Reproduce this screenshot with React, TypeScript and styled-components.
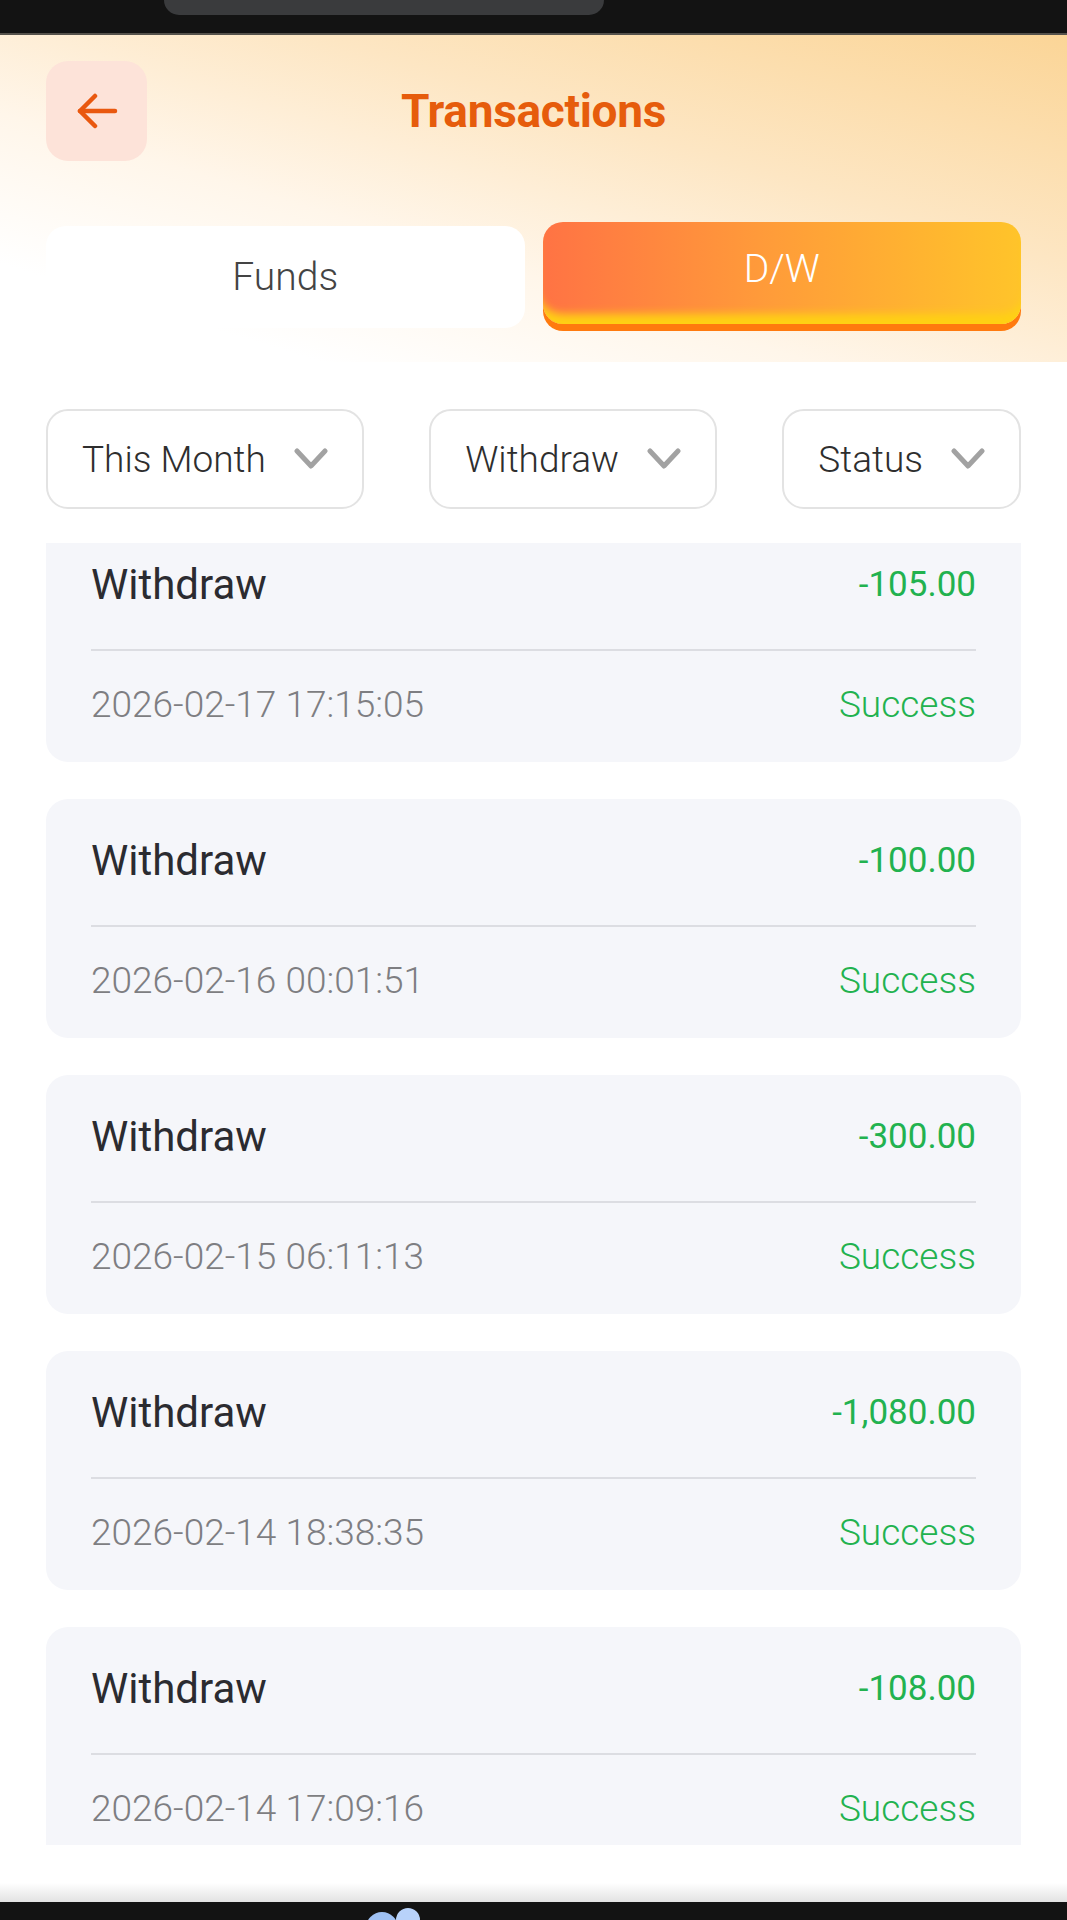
import styled, { createGlobalStyle } from "styled-components"

const GlobalStyle = createGlobalStyle`
  html, body {
    margin: 0;
    padding: 0;
    background: #ffffff;
  }
  body {
    font-family: Roboto, "Noto Sans", "Liberation Sans", sans-serif;
  }
  * {
    box-sizing: border-box;
  }
`

const Screen = styled.div`
  width: 1067px;
  height: 1920px;
  display: flex;
  flex-direction: column;
  overflow: hidden;
  background: #ffffff;
`

const StatusBar = styled.div`
  height: 35px;
  flex-shrink: 0;
  background: #131313;
  border-bottom: 2px solid #55524c;
  display: flex;
`

const Notch = styled.div`
  width: 440px;
  height: 15px;
  margin-left: 164px;
  background: #3a3b3d;
  border-radius: 0 0 30px 30px;
`

const Header = styled.header`
  height: 327px;
  flex-shrink: 0;
  padding: 26px 46px 0;
  background: linear-gradient(
    to bottom left,
    #fbd597 0%,
    #fde6c3 35%,
    #fff6ea 62%,
    #ffffff 85%
  );
`

const TopRow = styled.div`
  display: grid;
  grid-template-columns: 101px 1fr 101px;
  align-items: center;
`

const BackButton = styled.button`
  width: 101px;
  height: 100px;
  border: none;
  border-radius: 22px;
  background: #fde3d9;
  display: flex;
  align-items: center;
  justify-content: center;
  padding: 0;
`

const Title = styled.h1`
  margin: 0;
  text-align: center;
  font-size: 46px;
  font-weight: 700;
  color: #e65c0c;
  letter-spacing: -0.3px;
`

const Tabs = styled.div`
  display: grid;
  grid-template-columns: 1fr 1fr;
  gap: 18px;
  margin-top: 61px;
  align-items: start;
`

const Tab = styled.div<{ $active?: boolean }>`
  height: 102px;
  border-radius: 20px;
  display: flex;
  align-items: center;
  justify-content: center;
  font-size: 39px;
  font-weight: 300;
  color: ${(p) => (p.$active ? "#ffffff" : "#444444")};
  margin-top: ${(p) => (p.$active ? "0" : "4px")};
  background: ${(p) =>
    p.$active
      ? "linear-gradient(90deg, #ff7344 0%, #ff9a3a 45%, #ffc42a 100%)"
      : "#ffffff"};
  box-shadow: ${(p) =>
    p.$active
      ? "inset 0 -16px 8px -6px #ffd114, 0 7px 0 #ff7a0e"
      : "none"};
  padding-bottom: ${(p) => (p.$active ? "8px" : "0")};
`

const Filters = styled.div`
  display: flex;
  justify-content: space-between;
  padding: 0 46px;
  margin-top: 47px;
  flex-shrink: 0;
`

const FilterBox = styled.div`
  height: 100px;
  padding: 0 34px 0 34px;
  display: flex;
  align-items: center;
  gap: 28px;
  border: 2px solid #e3e3e3;
  border-radius: 22px;
  background: #ffffff;
  font-size: 37px;
  font-weight: 300;
  color: #2e2e2e;
`

const List = styled.div`
  margin: 34px 46px 0;
  height: 1302px;
  overflow: hidden;
  flex-shrink: 0;
`

const ListInner = styled.div`
  margin-top: -20px;
  display: flex;
  flex-direction: column;
  gap: 37px;
`

const Card = styled.div`
  height: 239px;
  flex-shrink: 0;
  background: #f5f6fa;
  border-radius: 22px;
  padding: 0 45px;
  display: flex;
  flex-direction: column;
`

const CardTop = styled.div`
  height: 128px;
  padding-top: 38px;
  display: flex;
  justify-content: space-between;
  align-items: flex-start;
  border-bottom: 2px solid #dcdde2;
`

const CardBottom = styled.div`
  padding-top: 30px;
  display: flex;
  justify-content: space-between;
  align-items: flex-start;
`

const Kind = styled.span`
  font-size: 42px;
  line-height: 48px;
  color: #2b2b30;
`

const Amount = styled.span`
  font-size: 35px;
  line-height: 48px;
  font-weight: 400;
  color: #22b24f;
`

const DateText = styled.span`
  font-size: 37px;
  line-height: 48px;
  font-weight: 300;
  color: #7e7e82;
`

const Status = styled.span`
  font-size: 37px;
  line-height: 48px;
  font-weight: 300;
  color: #22b24f;
`

const Footer = styled.div`
  flex: 1;
  display: flex;
  flex-direction: column;
  justify-content: flex-end;
`

const FooterShade = styled.div`
  height: 19px;
  background: linear-gradient(#ffffff, #e2e2e2);
`

const NavBar = styled.div`
  height: 18px;
  background: #131313;
  position: relative;
  overflow: hidden;
`

const NavBlob = styled.svg`
  position: absolute;
  left: 360px;
  top: 4px;
`

const ArrowLeft = () => (
  <svg width="42" height="36" viewBox="0 0 42 36" fill="none">
    <polyline
      points="19,3 4,18 19,33"
      stroke="#e9580f"
      strokeWidth="4.5"
      strokeLinecap="round"
      strokeLinejoin="round"
    />
    <line
      x1="4"
      y1="18"
      x2="39"
      y2="18"
      stroke="#e9580f"
      strokeWidth="4.5"
      strokeLinecap="round"
    />
  </svg>
)

const Chevron = () => (
  <svg width="34" height="22" viewBox="0 0 34 22" fill="none">
    <polyline
      points="3,3 17,18 31,3"
      stroke="#a2a2a2"
      strokeWidth="5"
      strokeLinecap="round"
      strokeLinejoin="round"
    />
  </svg>
)

const records = [
  { amount: "-105.00", time: "2026-02-17 17:15:05" },
  { amount: "-100.00", time: "2026-02-16 00:01:51" },
  { amount: "-300.00", time: "2026-02-15 06:11:13" },
  { amount: "-1,080.00", time: "2026-02-14 18:38:35" },
  { amount: "-108.00", time: "2026-02-14 17:09:16" },
]

const filters = ["This Month", "Withdraw", "Status"]

const App = () => {
  return (
    <Screen>
      <GlobalStyle />
      <StatusBar>
        <Notch />
      </StatusBar>
      <Header>
        <TopRow>
          <BackButton aria-label="Back">
            <ArrowLeft />
          </BackButton>
          <Title>Transactions</Title>
          <span />
        </TopRow>
        <Tabs>
          <Tab>Funds</Tab>
          <Tab $active>D/W</Tab>
        </Tabs>
      </Header>
      <Filters>
        {filters.map((f) => (
          <FilterBox key={f}>
            {f}
            <Chevron />
          </FilterBox>
        ))}
      </Filters>
      <List>
        <ListInner>
          {records.map((r) => (
            <Card key={r.time}>
              <CardTop>
                <Kind>Withdraw</Kind>
                <Amount>{r.amount}</Amount>
              </CardTop>
              <CardBottom>
                <DateText>{r.time}</DateText>
                <Status>Success</Status>
              </CardBottom>
            </Card>
          ))}
        </ListInner>
      </List>
      <Footer>
        <FooterShade />
        <NavBar>
          <NavBlob width="70" height="30" viewBox="0 0 70 30">
            <circle cx="22" cy="22" r="16" fill="#9fc1f3" />
            <circle cx="48" cy="14" r="12" fill="#b8d2fa" />
          </NavBlob>
        </NavBar>
      </Footer>
    </Screen>
  )
}

export default App
